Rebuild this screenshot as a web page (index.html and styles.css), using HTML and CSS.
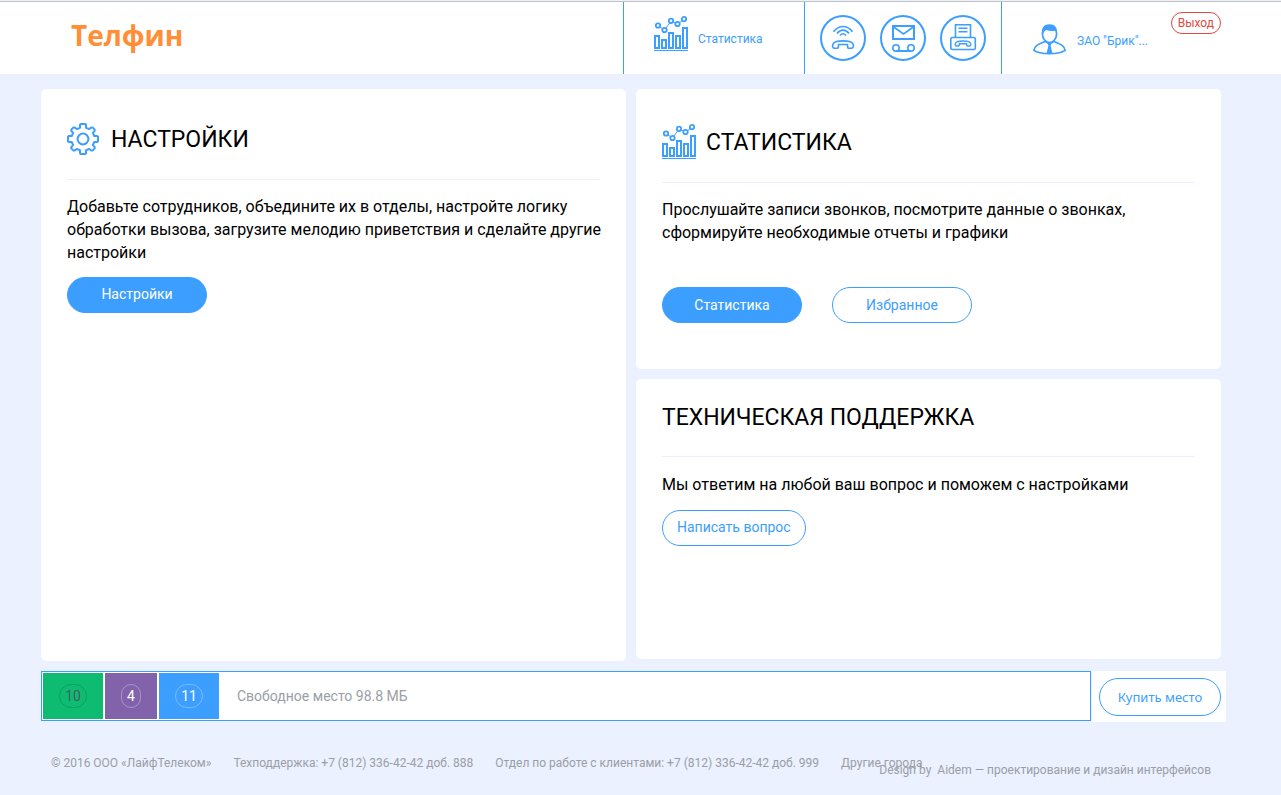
FILE: index.html
```html
<!DOCTYPE html>
<html lang="ru">
<head>
<meta charset="utf-8">
<title>Телфин</title>
<link rel="stylesheet" href="styles.css">
</head>
<body>
<svg class="defs" aria-hidden="true">
  <symbol id="chart" viewBox="0 0 34 35">
    <g fill="none" stroke="currentColor">
      <path stroke-width="2" d="M1 20h4v12H1zM8 24h4v8H8zM15 17h4v15h-4zM22 20h4v12h-4zM29 12h4v20h-4z"/>
      <path d="M0 34.500h34"/>
      <path d="M5.800 10.800l3 2M11.800 12.300l4-5.700M18.800 5.800l3 1.400M25.300 7l3-2.500"/>
      <g stroke-width="1.800"><circle cx="4" cy="9.500" r="2.200"/><circle cx="10.500" cy="14" r="2.200"/><circle cx="17" cy="4.800" r="2.200"/><circle cx="23.500" cy="8" r="2.200"/><circle cx="30" cy="3.100" r="2.200"/></g>
    </g>
  </symbol>
</svg>

<header class="topbar">
  <a class="logo" href="#">Телфин</a>
  <a class="top-stat" href="#"><svg class="chart-icon"><use href="#chart"/></svg><span>Статистика</span></a>
  <nav class="services">
    <a class="round" href="#" aria-label="Звонки">
      <svg viewBox="0 0 46 46" fill="none" stroke="currentColor" stroke-width="1.600">
        <path d="M13.500 16.800c5.500-7 13.500-7 19 0M17 18.500c3.500-4.500 8.500-4.500 12 0M20 20.500c2-2.300 4-2.300 6 0"/>
        <path d="M14.500 33.200c-2.500 0-2.200-3.200-1.200-4.700 1.200-2 4.500-2.600 9.700-2.600s8.500.6 9.700 2.600c1 1.500 1.300 4.700-1.200 4.700h-2.700c-1.300 0-1.300-.8-1.300-3.700h-9c0 2.900 0 3.700-1.300 3.700z"/>
      </svg>
    </a>
    <a class="round" href="#" aria-label="Голосовая почта">
      <svg viewBox="0 0 46 46" fill="none" stroke="currentColor" stroke-width="1.600">
        <path stroke-width="2" d="M13 11h21v13H13z"/><path d="M13 11.500l10.500 7.500L34 11.500"/>
        <circle cx="16" cy="33" r="3.200"/><circle cx="31" cy="33" r="3.200"/><path stroke-width="2" d="M16 36h15"/>
      </svg>
    </a>
    <a class="round" href="#" aria-label="Факс">
      <svg viewBox="0 0 46 46" fill="none" stroke="currentColor" stroke-width="1.600">
        <path d="M15.500 22.500V9.800h15v12.700M18.500 13.300h9M18.500 16.800h9"/>
        <rect x="10.800" y="22.500" width="24.500" height="12" rx="1.500"/>
        <path stroke-width="1.400" d="M16.500 31c-1.700 0-1.500-2.200-.8-3.200.9-1.300 3.300-1.800 7.300-1.800s6.400.5 7.300 1.800c.7 1 .9 3.200-.8 3.200h-2c-.9 0-.9-.7-.9-2.300h-7.200c0 1.600 0 2.300-.9 2.300z"/>
      </svg>
    </a>
  </nav>
  <div class="account">
    <a class="user" href="#">
      <svg class="user-icon" viewBox="0 0 33 31" fill="none" stroke="currentColor" stroke-width="1.700">
        <path d="M10 6.500c-.4 1.600-.5 2.200-.6 3.500.2 4.600 3.200 8.700 7.100 8.700s6.900-4.100 7.100-8.700c-.1-1.300-.2-1.900-.6-3.500"/>
        <path fill="currentColor" stroke="none" d="M9.100 9.500C8.200 3.500 11.300.2 16.500.2s8.300 3.300 7.400 9.300l-1.300-2.800c-3.300.9-6.400.1-8.900-.7-1.800.7-2.900 1.600-3.300 3.500z"/>
        <path d="M12.500 17.200C7.500 20 2 20.200.9 26.300c3.500 2.700 9.600 3.300 15.600 3.300s12.100-.6 15.600-3.300C31 20.200 25.500 20 20.500 17.200M12.500 17.500l4 2.500 4-2.500"/>
        <path fill="currentColor" stroke="none" d="M14.700 19h3.600l-.7 2.700 1.900 8h-6l1.900-8z"/>
      </svg>
      <span>ЗАО "Брик"...</span>
    </a>
    <a class="logout" href="#">Выход</a>
  </div>
</header>

<main class="page">
  <div class="cards">
    <section class="card card-tall">
      <h2 class="title">
        <svg class="gear-icon" viewBox="0 0 32 32" fill="none" stroke="currentColor" stroke-width="2" stroke-linejoin="round">
          <path d="M13 4.800V1.800l.8-.8h4.400l.8.800v3l3.300 1.300 2-1.700h1.200l2.200 2.200v1.200l-1.800 2.100L27.200 13h3l.8.800v4.400l-.8.800h-3l-1.300 3.100 1.800 2.100v1.200l-2.200 2.200h-1.200l-2-1.700-3.300 1.300v3l-.8.800h-4.400l-.8-.8v-3l-3.300-1.300-2 1.700H6.500l-2.200-2.200v-1.200l1.800-2.100L4.800 19h-3l-.8-.8v-4.400l.8-.8h3l1.300-3.100-1.800-2.100V6.600l2.200-2.200h1.200l2 1.700z"/>
          <circle cx="16" cy="16" r="5.400"/>
        </svg>
        <span>НАСТРОЙКИ</span>
      </h2>
      <p class="text">Добавьте сотрудников, объедините их в отделы, настройте логику обработки вызова, загрузите мелодию приветствия и сделайте другие настройки</p>
      <button class="btn btn-fill" type="button">Настройки</button>
    </section>
    <div class="side">
      <section class="card">
        <h2 class="title title-chart"><svg class="chart-icon"><use href="#chart"/></svg><span>СТАТИСТИКА</span></h2>
        <p class="text">Прослушайте записи звонков, посмотрите данные о звонках, сформируйте необходимые отчеты и графики</p>
        <div class="actions">
          <button class="btn btn-fill" type="button">Статистика</button>
          <button class="btn" type="button">Избранное</button>
        </div>
      </section>
      <section class="card">
        <h2 class="title title-plain">ТЕХНИЧЕСКАЯ ПОДДЕРЖКА</h2>
        <p class="text">Мы ответим на любой ваш вопрос и поможем с настройками</p>
        <button class="btn" type="button">Написать вопрос</button>
      </section>
    </div>
  </div>

  <div class="storage">
    <div class="meter">
      <a class="seg seg-green" href="#"><span>10</span></a>
      <a class="seg seg-purple" href="#"><span>4</span></a>
      <a class="seg seg-blue" href="#"><span>11</span></a>
      <span class="free">Свободное место 98.8 МБ</span>
    </div>
    <div class="buy"><button class="btn btn-buy" type="button">Купить место</button></div>
  </div>
</main>

<footer class="footer">
  <span>© 2016 ООО «ЛайфТелеком»</span>
  <span>Техподдержка: +7 (812) 336-42-42 доб. 888</span>
  <span>Отдел по работе с клиентами: +7 (812) 336-42-42 доб. 999</span>
  <a href="#">Другие города</a>
  <p class="credit"><span>Design by</span><span><a href="#">Aidem</a> — проектирование и дизайн интерфейсов</span></p>
</footer>
</body>
</html>
```
FILE: styles.css
```css
* { box-sizing: border-box; }
body {
  margin: 0;
  background: #ebf1fe;
  color: #000;
  font: 14px/20px Roboto, "Liberation Sans", sans-serif;
}
a { color: inherit; text-decoration: none; }
svg { display: block; flex: none; }
.defs { position: absolute; width: 0; height: 0; }

.topbar {
  display: flex;
  height: 73px;
  margin-top: 1px;
  padding-right: 60px;
  background: #fff;
  border-top: 1px solid #c3c3c3;
  color: #3c9eff;
  font-size: 12px;
}
.logo {
  flex: 1;
  padding: 13px 0 0 71px;
  color: #ff8e37;
  font: bold 28px/40px "Open Sans", "Noto Sans", sans-serif;
}
.top-stat {
  display: flex;
  gap: 10px;
  width: 181px;
  padding: 14px 0 0 30px;
  border-left: 1px solid #3c9eff;
}
.top-stat span { padding-top: 13px; }
.chart-icon { width: 34px; height: 35px; color: #3c9eff; }
.services {
  display: flex;
  gap: 14px;
  padding: 13px 15px 0;
  border: solid #3c9eff;
  border-width: 0 1px;
}
.round {
  width: 46px;
  height: 46px;
  border: 2px solid #3c9eff;
  border-radius: 50%;
}
.round svg { width: 46px; height: 46px; margin: -2px; }
.account {
  display: flex;
  justify-content: space-between;
  align-items: flex-start;
  width: 219px;
  padding: 10px 0 0 31px;
}
.user { display: flex; gap: 11px; padding-top: 12px; }
.user span { padding-top: 7px; }
.user-icon { width: 33px; height: 31px; }
.logout {
  padding: 0 6px;
  border: 1px solid #dc4a43;
  border-radius: 11px;
  color: #dc4a43;
}

.page { padding: 15px 60px 0 41px; }
.cards { display: grid; grid-template-columns: 1fr 1fr; gap: 10px; }
.side { display: grid; align-content: start; gap: 10px; }
.card {
  min-height: 280px;
  padding: 0 20px 26px 26px;
  background: #fff;
  border-radius: 5px;
}
.card-tall { min-height: 572px; }
.title {
  display: flex;
  align-items: center;
  gap: 12px;
  margin: 0 6px 15px 0;
  padding: 34px 0 24px;
  border-bottom: 1px solid #ebf1fe;
  font-size: 23px;
  line-height: 32px;
  font-weight: 400;
}
.title span { padding-top: 2px; line-height: 30px; }
.title-chart { gap: 10px; padding: 35px 0 23px; }
.title-plain { margin-bottom: 16px; padding: 23px 0 22px; }
.text { margin: 0 0 13px; font-size: 16px; line-height: 23px; }
.title-plain + .text { margin-bottom: 14px; }
.gear-icon { width: 32px; height: 32px; color: #3c9eff; }
.actions { display: flex; gap: 30px; padding-top: 30px; }
.btn {
  min-width: 140px;
  height: 36px;
  padding: 0 14px 2px;
  background: #fff;
  border: 1px solid #3c9eff;
  border-radius: 18px;
  color: #3c9eff;
  font: inherit;
}
.btn-fill { background: #3c9eff; color: #fff; }
.actions .btn { padding-bottom: 0; }

.storage { display: flex; margin: 10px -5px 0 0; }
.meter {
  display: flex;
  flex: 1;
  gap: 2px;
  height: 50px;
  padding: 1px;
  background: #fff;
  border: 1px solid #3c9eff;
}
.seg {
  display: grid;
  place-items: center;
  width: 60px;
  color: #fff;
}
.seg span {
  padding: 1px 5px;
  border: 1px solid rgba(255, 255, 255, .3);
  border-radius: 12px;
  line-height: 20px;
}
.seg-green { background: #0dbc71; color: #4b5a63; }
.seg-green span { border-color: rgba(0, 0, 0, .15); }
.seg-purple { width: 52px; background: #8263ab; }
.seg-blue { background: #3c9eff; }
.free { align-self: center; padding-left: 16px; color: #9a9ea6; }
.buy {
  height: 51px;
  margin-left: 1px;
  padding: 7px 5px 0 7px;
  background: #fff;
}
.btn-buy {
  width: 122px;
  min-width: 0;
  height: 38px;
  padding: 0;
  border-radius: 19px;
  font-family: "Noto Sans", sans-serif;
  font-size: 13px;
}

.footer {
  position: relative;
  display: flex;
  gap: 22px;
  padding: 31px 60px 22px 51px;
  color: #9a9ea6;
  font-size: 12px;
  white-space: nowrap;
}
.credit {
  position: absolute;
  right: 70px;
  top: 38px;
  display: flex;
  gap: 6px;
  margin: 0;
}
```
